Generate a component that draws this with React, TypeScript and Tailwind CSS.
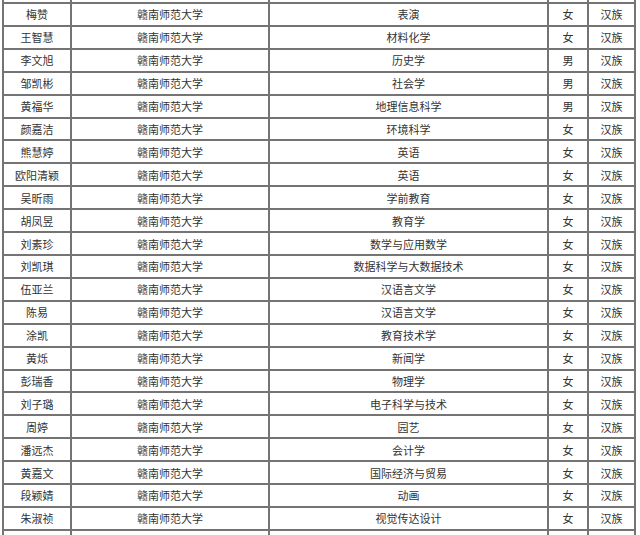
import React from "react";

const rows: [string, string, string, string][] = [
  ["梅赞", "表演", "女", "汉族"],
  ["王智慧", "材料化学", "女", "汉族"],
  ["李文旭", "历史学", "男", "汉族"],
  ["邹凯彬", "社会学", "男", "汉族"],
  ["黄福华", "地理信息科学", "男", "汉族"],
  ["颜嘉洁", "环境科学", "女", "汉族"],
  ["熊慧婷", "英语", "女", "汉族"],
  ["欧阳清颖", "英语", "女", "汉族"],
  ["吴昕雨", "学前教育", "女", "汉族"],
  ["胡凤昱", "教育学", "女", "汉族"],
  ["刘素珍", "数学与应用数学", "女", "汉族"],
  ["刘凯琪", "数据科学与大数据技术", "女", "汉族"],
  ["伍亚兰", "汉语言文学", "女", "汉族"],
  ["陈易", "汉语言文学", "女", "汉族"],
  ["涂凯", "教育技术学", "女", "汉族"],
  ["黄烁", "新闻学", "女", "汉族"],
  ["彭瑞香", "物理学", "女", "汉族"],
  ["刘子璐", "电子科学与技术", "女", "汉族"],
  ["周婷", "园艺", "女", "汉族"],
  ["潘远杰", "会计学", "女", "汉族"],
  ["黄嘉文", "国际经济与贸易", "女", "汉族"],
  ["段颖婧", "动画", "女", "汉族"],
  ["朱淑祯", "视觉传达设计", "女", "汉族"],
];

const cell =
  "bg-white flex items-center justify-center pt-[1px] text-[11px] leading-none text-[#333333] whitespace-nowrap overflow-hidden";

export default function App() {
  return (
    <div
      className="w-[640px] h-[535px] overflow-hidden bg-white"
      style={{ fontFamily: '"Noto Sans CJK SC", "Noto Sans", sans-serif' }}
    >
      <div className="ml-[2px] w-[634px] h-[560px] bg-[#747474] px-[2px] grid grid-cols-[66px_196px_277px_38px_45px] grid-rows-[2px_repeat(23,20.91px)_30px] gap-[2px]">
        {[0, 1, 2, 3, 4].map((i) => (
          <div key={`top${i}`} className="bg-white" />
        ))}
        {rows.map((r, idx) => (
          <React.Fragment key={idx}>
            <div className={cell}>{r[0]}</div>
            <div className={cell}>赣南师范大学</div>
            <div className={cell}>{r[1]}</div>
            <div className={cell}>{r[2]}</div>
            <div className={cell}>{r[3]}</div>
          </React.Fragment>
        ))}
        {[0, 1, 2, 3, 4].map((i) => (
          <div key={`bot${i}`} className="bg-white" />
        ))}
      </div>
    </div>
  );
}
